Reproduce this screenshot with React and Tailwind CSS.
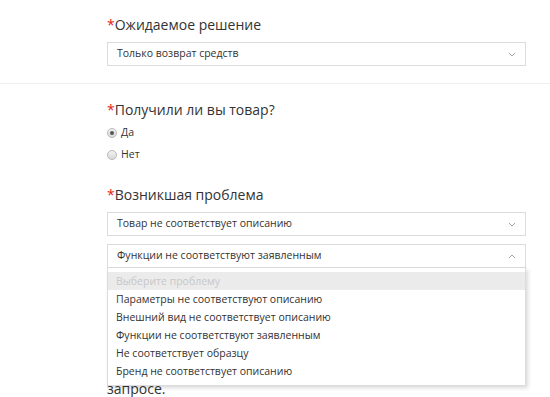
import React from 'react';

const Chevron = ({ up = false }) => (
  <svg width="8" height="5" viewBox="0 0 8 5" className="shrink-0">
    <polyline
      points={up ? '1,4 4,1 7,4' : '1,1 4,4 7,1'}
      fill="none"
      stroke="#a8a8a8"
      strokeWidth="1"
    />
  </svg>
);

const Select = ({ value, open = false }) => (
  <div className="flex h-6 items-center justify-between border border-[#dcdcdc] bg-white pl-[9px] pr-[9px] text-[10.5px] text-[#333]">
    <span>{value}</span>
    <Chevron up={open} />
  </div>
);

const Title = ({ children }) => (
  <div className="text-[14px] leading-5 text-[#333]">
    <span className="text-[#e8190a]">*</span>
    {children}
  </div>
);

const Radio = ({ checked, label }) => (
  <label className="flex h-[14px] items-center gap-[4px] text-[10.5px] text-[#333]">
    <span className="flex h-[10px] w-[10px] items-center justify-center rounded-full border border-[#b8b8b8] bg-gradient-to-b from-[#f4f4f4] to-[#d8d8d8]">
      {checked && <span className="h-[4px] w-[4px] rounded-full bg-[#555]" />}
    </span>
    {label}
  </label>
);

const options = [
  'Параметры не соответствуют описанию',
  'Внешний вид не соответствует описанию',
  'Функции не соответствуют заявленным',
  'Не соответствует образцу',
  'Бренд не соответствует описанию',
];

export default function App() {
  return (
    <div className="h-[397px] w-[550px] overflow-hidden bg-white" style={{ fontFamily: '"Open Sans", "Noto Sans", sans-serif' }}>
      <div className="pl-[107px] pr-6 pt-[15px]">
        <Title>Ожидаемое решение</Title>
        <div className="mt-[7px]">
          <Select value="Только возврат средств" />
        </div>
      </div>

      <div className="mt-[17px] h-px bg-[#efefef]" />

      <div className="pl-[107px] pr-6 pt-[16px]">
        <Title>Получили ли вы товар?</Title>
        <div className="mt-[6px] flex flex-col gap-2">
          <Radio checked label="Да" />
          <Radio label="Нет" />
        </div>

        <div className="mt-[23px]">
          <Title>Возникшая проблема</Title>
        </div>
        <div className="mt-[7px]">
          <Select value="Товар не соответствует описанию" />
        </div>
        <div className="relative mt-2">
          <Select value="Функции не соответствуют заявленным" open />
          <div className="absolute left-0 right-0 top-full z-10 border border-t-0 border-[#dcdcdc] bg-white pt-[4px] pb-[5px] text-[10.5px] leading-[18px] text-[#333] shadow-[2px_2px_4px_rgba(0,0,0,0.15)]">
            <div className="bg-[#ebebeb] pl-[8px] text-[#c8c8c8]">Выберите проблему</div>
            {options.map((o) => (
              <div key={o} className="pl-[8px]">{o}</div>
            ))}
          </div>
        </div>

        <p className="mt-[111px] whitespace-nowrap text-[14px] leading-5 text-[#333]">
          запросе.
        </p>
      </div>
    </div>
  );
}
